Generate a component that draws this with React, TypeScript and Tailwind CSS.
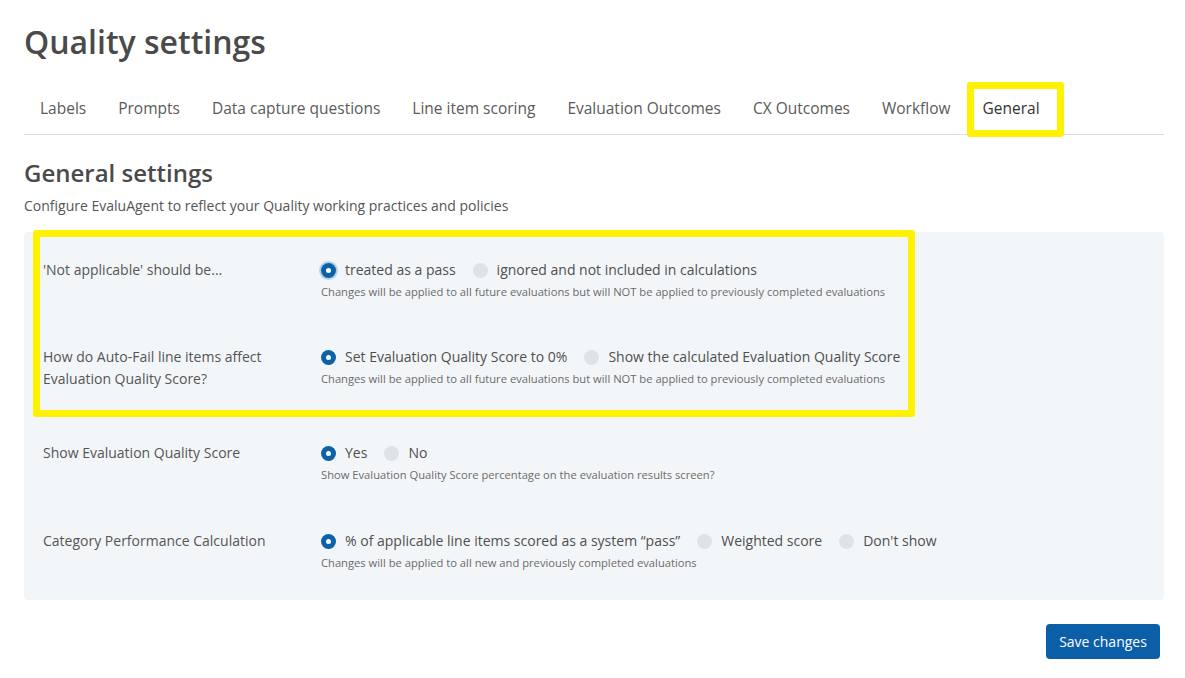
import React from 'react';

const tabs = [
  'Labels',
  'Prompts',
  'Data capture questions',
  'Line item scoring',
  'Evaluation Outcomes',
  'CX Outcomes',
  'Workflow',
  'General',
];

type Option = { label: string; checked?: boolean; focus?: boolean };

const Radio = ({ opt }: { opt: Option }) => (
  <label className="flex items-center gap-[9px] mr-[17px] cursor-pointer">
    {opt.checked ? (
      <span
        className={
          'flex h-[15px] w-[15px] items-center justify-center rounded-full bg-[#0b62a6] ' +
          (opt.focus ? 'ring-2 ring-[#b9d2ea]' : '')
        }
      >
        <span className="h-[5px] w-[5px] rounded-full bg-white" />
      </span>
    ) : (
      <span className="h-[15px] w-[15px] rounded-full bg-[#dfe3e8]" />
    )}
    <span className="text-[14px] leading-[22px] text-[#4f4f4f]">{opt.label}</span>
  </label>
);

const SettingRow = ({
  label,
  options,
  hint,
  height,
}: {
  label: React.ReactNode;
  options: Option[];
  hint: string;
  height: string;
}) => (
  <div className={'grid grid-cols-[278px_1fr] ' + height}>
    <div className="text-[14px] leading-[22px] text-[#555]">{label}</div>
    <div>
      <div className="flex items-center">
        {options.map((o) => (
          <Radio key={o.label} opt={o} />
        ))}
      </div>
      <p className="mt-[3px] text-[11.2px] leading-[16px] text-[#6b6b6b]">{hint}</p>
    </div>
  </div>
);

export default function App() {
  const future =
    'Changes will be applied to all future evaluations but will NOT be applied to previously completed evaluations';

  return (
    <div
      className="relative min-h-[678px] bg-white"
      style={{ fontFamily: '"Open Sans", "Noto Sans", sans-serif' }}
    >
      <div className="ml-[24px] w-[1140px] pt-[22px]">
        <h1 className="text-[32px] leading-[40px] font-semibold text-[#4a4a4a]">Quality settings</h1>

        {/* Tabs */}
        <div className="mt-[20px] flex border-b border-[#dcdcdc]">
          {tabs.map((t) => (
            <div
              key={t}
              className={
                'flex h-[52px] items-center px-[16px] pt-[2px] text-[15.5px] ' +
                (t === 'General' ? 'text-[#333]' : 'text-[#5a5a5a]')
              }
            >
              {t}
            </div>
          ))}
        </div>

        <h2 className="mt-[22px] text-[24px] leading-[32px] font-semibold text-[#4a4a4a]">General settings</h2>
        <p className="mt-[7px] text-[14px] leading-[20px] text-[#555]">
          Configure EvaluAgent to reflect your Quality working practices and policies
        </p>

        {/* Settings panel */}
        <div className="mt-[16px] rounded-[4px] bg-[#f3f6f9] pl-[19px] pt-[27px] pb-[29px]">
          <SettingRow
            height="h-[87px]"
            label="'Not applicable' should be..."
            options={[
              { label: 'treated as a pass', checked: true, focus: true },
              { label: 'ignored and not included in calculations' },
            ]}
            hint={future}
          />
          <SettingRow
            height="h-[96px]"
            label={
              <>
                How do Auto-Fail line items affect
                <br />
                Evaluation Quality Score?
              </>
            }
            options={[
              { label: 'Set Evaluation Quality Score to 0%', checked: true },
              { label: 'Show the calculated Evaluation Quality Score' },
            ]}
            hint={future}
          />
          <SettingRow
            height="h-[88px]"
            label="Show Evaluation Quality Score"
            options={[{ label: 'Yes', checked: true }, { label: 'No' }]}
            hint="Show Evaluation Quality Score percentage on the evaluation results screen?"
          />
          <SettingRow
            height="h-[41px]"
            label="Category Performance Calculation"
            options={[
              { label: '% of applicable line items scored as a system \u201cpass\u201d', checked: true },
              { label: 'Weighted score' },
              { label: "Don't show" },
            ]}
            hint="Changes will be applied to all new and previously completed evaluations"
          />
        </div>

        <div className="mt-[24px] flex justify-end pr-[4px]">
          <button className="h-[35px] w-[114px] rounded-[4px] bg-[#0b5ea8] text-[14px] text-white">
            Save changes
          </button>
        </div>
      </div>

      {/* highlight annotations */}
      <div className="pointer-events-none absolute left-[967px] top-[82px] h-[55px] w-[97px] rounded-[3px] border-[7px] border-[#fff200]" />
      <div className="pointer-events-none absolute left-[33px] top-[230px] h-[187px] w-[882px] rounded-[3px] border-[7px] border-[#fff200]" />
    </div>
  );
}
